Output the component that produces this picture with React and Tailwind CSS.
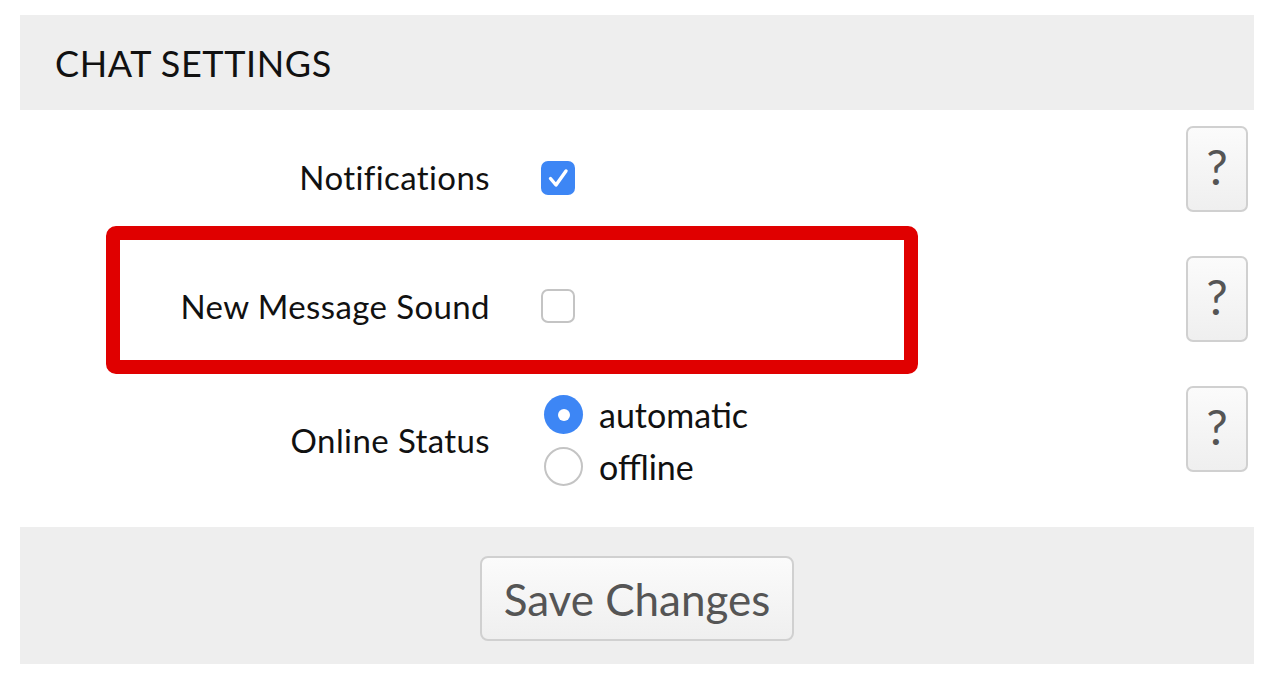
import React from "react";

function HelpButton() {
  return (
    <button className="w-[62px] h-[86px] rounded-[7px] border-2 border-[#d0d0d0] bg-gradient-to-b from-[#fbfbfb] to-[#efefef] text-[48px] leading-none text-[#555] flex items-center justify-center pb-[4px]">
      ?
    </button>
  );
}

function Checkbox({ checked }) {
  if (checked) {
    return (
      <div className="w-[34px] h-[34px] rounded-[7px] bg-[#3d86f5] flex items-center justify-center">
        <svg width="34" height="34" viewBox="0 0 34 34" fill="none">
          <path d="M9.5 17.5l5.5 6.5 10-14" stroke="white" strokeWidth="3.4" strokeLinecap="round" strokeLinejoin="round" />
        </svg>
      </div>
    );
  }
  return <div className="w-[34px] h-[34px] rounded-[7px] border-2 border-[#c4c4c4] bg-white" />;
}

function Radio({ checked }) {
  if (checked) {
    return (
      <div className="w-[39px] h-[39px] rounded-full bg-[#3d86f5] flex items-center justify-center">
        <div className="w-[12px] h-[12px] rounded-full bg-white" />
      </div>
    );
  }
  return <div className="w-[39px] h-[39px] rounded-full border-2 border-[#c4c4c4] bg-white" />;
}

function Row({ label, labelTop, controlTop, children }) {
  return (
    <div className="flex items-start h-[130px]">
      <div className="w-[470px] text-right text-[33px] leading-[40px] tracking-[0.4px] text-[#111]" style={{ marginTop: labelTop }}>
        {label}
      </div>
      <div className="flex-1 ml-[51px]" style={{ marginTop: controlTop }}>
        {children}
      </div>
      <div className="mt-[16px] mr-[6px]">
        <HelpButton />
      </div>
    </div>
  );
}

export default function App() {
  return (
    <div className="w-[1280px] h-[683px] bg-white pl-[20px] pr-[26px] pt-[15px] relative" style={{ fontFamily: "Lato, 'Open Sans', sans-serif" }}>
      <div className="h-[95px] bg-[#eeeeee] flex items-center pl-[35px]">
        <h1 className="text-[36px] text-[#111] tracking-[0.6px]">CHAT SETTINGS</h1>
      </div>

      <Row label="Notifications" labelTop={47} controlTop={51}>
        <Checkbox checked />
      </Row>
      <Row label="New Message Sound" labelTop={46} controlTop={49}>
        <Checkbox />
      </Row>
      <Row label="Online Status" labelTop={50} controlTop={25}>
        <div className="flex flex-col gap-[13px] ml-[3px]">
          <label className="flex items-center gap-[16px] text-[34px] leading-[39px] text-[#111]">
            <Radio checked />
            automatic
          </label>
          <label className="flex items-center gap-[16px] text-[34px] leading-[39px] text-[#111]">
            <Radio />
            offline
          </label>
        </div>
      </Row>

      <div className="mt-[27px] h-[137px] bg-[#eeeeee] flex items-center justify-center">
        <button className="w-[314px] h-[85px] mt-[6px] rounded-[8px] border-2 border-[#d0d0d0] bg-gradient-to-b from-[#fbfbfb] to-[#efefef] text-[44px] text-[#555]">
          Save Changes
        </button>
      </div>

      <div className="absolute left-[106px] top-[226px] w-[812px] h-[148px] border-[14px] border-[#e00000] rounded-[10px] pointer-events-none" />
    </div>
  );
}
